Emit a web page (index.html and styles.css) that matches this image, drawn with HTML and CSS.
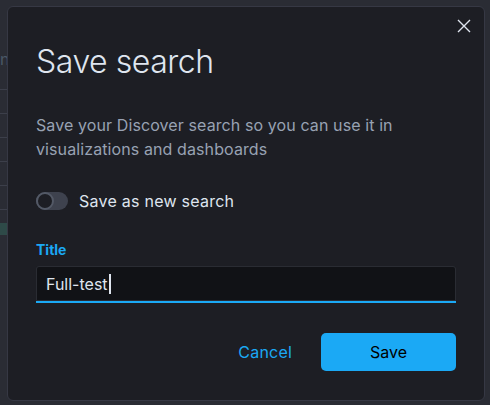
FILE: index.html
```html
<!DOCTYPE html>
<html>
<head>
<meta charset="utf-8">
<link rel="stylesheet" href="styles.css">
</head>
<body>
<div class="backdrop">
  <div class="bg-page">
    <div class="bg-letter">n</div>
    <div class="bg-line"></div>
    <div class="bg-line"></div>
    <div class="bg-line"></div>
    <div class="bg-line"></div>
    <div class="bg-line"></div>
    <div class="bg-line"></div>
    <div class="bg-hl"></div>
  </div>
</div>
<div class="modal">
  <button class="close" aria-label="Close">
    <svg width="14" height="14" viewBox="0 0 14 14"><path d="M1 1 L13 13 M13 1 L1 13" stroke="#dfe5ef" stroke-width="1.4" fill="none"/></svg>
  </button>
  <h1 class="title">Save search</h1>
  <p class="desc">Save your Discover search so you can use it in visualizations and dashboards</p>
  <div class="switch-row">
    <span class="switch"><span class="knob"></span></span>
    <span class="switch-label">Save as new search</span>
  </div>
  <div class="field">
    <label class="label">Title</label>
    <div class="input"><span class="value">Full-test</span><span class="caret"></span></div>
  </div>
  <div class="footer">
    <button class="cancel">Cancel</button>
    <button class="save">Save</button>
  </div>
</div>
</body>
</html>
```

FILE: styles.css
```css
html, body {
  margin: 0;
  padding: 0;
  width: 490px;
  height: 405px;
  overflow: hidden;
  background: #2a2c34;
  font-family: "Inter", "Liberation Sans", sans-serif;
}
.backdrop {
  width: 490px;
  height: 405px;
}
.bg-page {
  width: 7px;
  height: 405px;
  display: flex;
  flex-direction: column;
  padding-top: 52px;
  gap: 23px;
  box-sizing: border-box;
  overflow: hidden;
}
.bg-letter {
  color: #4a5866;
  font-size: 16px;
  line-height: 14px;
  height: 14px;
}
.bg-line {
  height: 1px;
  background: #3c3f4a;
}
.bg-hl {
  height: 12px;
  background: #2e4a48;
  margin-top: -10px;
}
.modal {
  position: absolute;
  left: 7px;
  top: 6px;
  width: 476px;
  height: 393px;
  background: #1d1e24;
  border: 1px solid #363844;
  border-radius: 6px;
  overflow: hidden;
}
.close {
  position: absolute;
  right: 12px;
  top: 11px;
  width: 16px;
  height: 16px;
  padding: 0;
  border: 0;
  background: none;
  display: flex;
  align-items: center;
  justify-content: center;
}
.title {
  margin: 35px 0 0 28px;
  font-size: 32px;
  font-weight: 300;
  line-height: 40px;
  color: #dfe5ef;
  letter-spacing: -0.45px;
}
.desc {
  margin: 31px 0 0 28px;
  width: 380px;
  font-size: 16px;
  line-height: 24px;
  color: #98a2b3;
  letter-spacing: 0.1px;
}
.switch-row {
  display: flex;
  align-items: center;
  gap: 11px;
  margin: 30px 0 0 28px;
}
.switch {
  width: 32px;
  height: 18px;
  border-radius: 10px;
  background: #3e424e;
  position: relative;
  display: block;
}
.knob {
  position: absolute;
  left: 0;
  top: 0;
  width: 14px;
  height: 14px;
  border-radius: 50%;
  background: #1d1e24;
  border: 2px solid #535966;
}
.switch-label {
  font-size: 16px;
  color: #dfe5ef;
  line-height: 20px;
  letter-spacing: 0.25px;
}
.field {
  margin: 30px 0 0 28px;
  width: 420px;
}
.label {
  display: block;
  font-size: 14px;
  font-weight: 700;
  color: #1ba9f5;
  line-height: 18px;
}
.input {
  margin-top: 7px;
  height: 35px;
  background: #111216;
  border-bottom: 2px solid #1ba9f5;
  border-radius: 3px 3px 0 0;
  display: flex;
  align-items: center;
  padding-left: 10px;
  box-shadow: inset 0 0 0 1px #2a2c33;
}
.value {
  font-size: 16px;
  color: #dfe5ef;
}
.caret {
  width: 2px;
  height: 20px;
  background: #dfe5ef;
  margin-left: 1px;
}
.footer {
  display: flex;
  justify-content: flex-end;
  align-items: center;
  gap: 29px;
  margin: 30px 0 0 28px;
  width: 420px;
}
.cancel {
  background: none;
  border: 0;
  padding: 0;
  font-family: inherit;
  font-size: 16px;
  color: #1ba9f5;
  letter-spacing: 0.2px;
}
.save {
  width: 135px;
  height: 38px;
  border: 0;
  border-radius: 5px;
  background: #1ba9f5;
  color: #000000;
  font-family: inherit;
  font-size: 16px;
}
```
